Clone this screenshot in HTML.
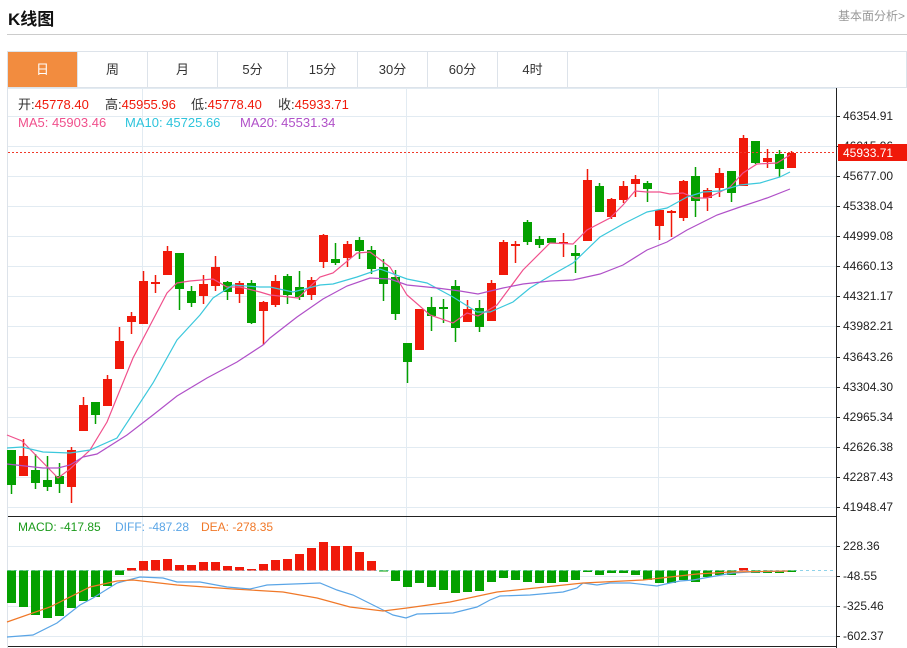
<!DOCTYPE html>
<html><head><meta charset="utf-8">
<style>
*{margin:0;padding:0;box-sizing:border-box}
body{width:907px;height:648px;background:#fff;font-family:"Liberation Sans","Noto Sans CJK SC",sans-serif;position:relative;overflow:hidden;color:#333}
.t{position:absolute;left:8px;top:5px;font-size:17px;font-weight:bold;color:#111}
.r{position:absolute;right:2px;top:7px;font-size:12px;color:#999}
.hl{position:absolute;left:7px;right:0;top:34px;border-top:1px solid #ccc}
.tabs{position:absolute;left:7px;top:51px;width:900px;height:37px;border:1px solid #dde3ea;display:flex}
.tabs div{width:70px;height:35px;line-height:35px;text-align:center;font-size:13px;border-right:1px solid #dde3ea;color:#333}
.tabs div.a{background:#f28c3f;color:#fff}
svg{position:absolute;left:0;top:0}
</style></head><body>
<div class="t">K线图</div>
<div class="r">基本面分析&gt;</div>
<div class="hl"></div>
<div class="tabs"><div class="a">日</div><div>周</div><div>月</div><div>5分</div><div>15分</div><div>30分</div><div>60分</div><div>4时</div></div>
<svg id="s" width="907" height="648" viewBox="0 0 907 648" font-family="Liberation Sans, Noto Sans CJK SC, sans-serif">
<g id="grid" stroke="#e2ebf2" stroke-width="1"></g>
<line x1="7.5" y1="88" x2="7.5" y2="648" stroke="#dde3ea"/>
<g id="c"></g>
<g id="m"></g>
<line x1="8" y1="516.5" x2="836" y2="516.5" stroke="#222"/>
<line x1="8" y1="646.5" x2="836" y2="646.5" stroke="#222"/>
<line x1="836.5" y1="88" x2="836.5" y2="648" stroke="#222"/>
<line x1="8" y1="152.5" x2="836" y2="152.5" stroke="#f03a2a" stroke-dasharray="2,2"/>
<g id="ax" font-size="12" fill="#222"></g>
<rect x="838" y="144" width="69" height="17" fill="#f0190a"/>
<text x="843" y="157" font-size="12" fill="#fff">45933.71</text>
<g font-size="13">
<text x="18" y="109" fill="#333">开:<tspan fill="#f0190a">45778.40</tspan></text>
<text x="105" y="109" fill="#333">高:<tspan fill="#f0190a">45955.96</tspan></text>
<text x="191" y="109" fill="#333">低:<tspan fill="#f0190a">45778.40</tspan></text>
<text x="278" y="109" fill="#333">收:<tspan fill="#f0190a">45933.71</tspan></text>
<text x="18" y="127" fill="#f0508c">MA5: 45903.46</text>
<text x="125" y="127" fill="#2ec4dc">MA10: 45725.66</text>
<text x="240" y="127" fill="#b050c8">MA20: 45531.34</text>
</g>
<g font-size="12">
<text x="18" y="531" fill="#1a9a1a">MACD: -417.85</text>
<text x="115" y="531" fill="#5aa5e6">DIFF: -487.28</text>
<text x="201" y="531" fill="#f07828">DEA: -278.35</text>
</g>
</svg>
<script>
var NS="http://www.w3.org/2000/svg";
function el(p,t,a){var e=document.createElementNS(NS,t);for(var k in a)e.setAttribute(k,a[k]);document.getElementById(p).appendChild(e);return e;}
var g="grid";
for(var y=116;y<=507;y+=30.07)el(g,"line",{x1:8,x2:836,y1:Math.round(y)+.5,y2:Math.round(y)+.5});
el(g,"line",{x1:8,x2:836,y1:88.5,y2:88.5});
[546,576,606,636].forEach(function(y){el(g,"line",{x1:8,x2:836,y1:y+.5,y2:y+.5});});
[142,406,658].forEach(function(x){el(g,"line",{x1:x+.5,x2:x+.5,y1:88,y2:646});});
var labs=["46354.91","46015.96","45677.00","45338.04","44999.08","44660.13","44321.17","43982.21","43643.26","43304.30","42965.34","42626.38","42287.43","41948.47"];
labs.forEach(function(l,i){var y=Math.round(116+i*30.07);el("ax","line",{x1:836,x2:840,y1:y+.5,y2:y+.5,stroke:"#222"});var t=el("ax","text",{x:843,y:y+4});t.textContent=l;});
[["228.36",546],["-48.55",576],["-325.46",606],["-602.37",636]].forEach(function(a){el("ax","line",{x1:836,x2:840,y1:a[1]+.5,y2:a[1]+.5,stroke:"#222"});var t=el("ax","text",{x:843,y:a[1]+4});t.textContent=a[0];});
var R="#f0190a",G="#04a000";
var C=[[450,485,450,494,G],[456,476,439,476,R],[470,483,454,489,G],[480,487,456,491,G],[476,484,463,493,G],[450,487,447,503,R],[405,431,397,431,R],[402,415,402,424,G],[379,406,375,406,R],[341,369,327,369,R],[316,322,312,334,R],[281,324,271,324,R],[282,284,275,293,R],[251,275,246,275,R],[253,289,253,310,G],[291,303,286,307,G],[284,296,275,304,R],[267,286,256,291,R],[282,292,281,300,G],[283,294,281,303,R],[283,323,280,324,G],[302,311,301,345,R],[281,305,275,307,R],[276,295,274,304,G],[287,297,271,300,G],[280,295,277,300,R],[235,262,234,268,R],[259,263,243,265,G],[244,258,241,267,R],[240,251,237,259,G],[250,269,246,274,G],[267,284,259,301,G],[277,314,270,320,G],[343,362,343,383,G],[309,350,309,350,R],[307,316,297,331,G],[307,308,299,323,G],[286,328,280,342,G],[309,322,300,322,R],[308,327,300,332,G],[283,321,280,321,R],[242,275,240,275,R],[244,246,241,263,R],[222,242,220,245,G],[239,245,236,248,G],[238,243,238,243,G],[242,243,233,257,R],[253,256,245,273,G],[180,241,169,241,R],[186,212,183,212,G],[199,217,198,219,R],[186,200,181,203,R],[179,184,175,197,R],[183,189,181,202,G],[210,226,210,240,R],[211,213,210,237,R],[181,218,180,221,R],[176,201,167,217,G],[190,198,188,211,R],[173,188,168,197,R],[171,193,171,202,G],[138,186,135,186,R],[141,163,141,164,G],[158,162,149,168,R],[154,169,150,177,G],[153,168,151,168,R]];
C.forEach(function(c,i){var x=11+12*i;el("c","line",{x1:x+.5,x2:x+.5,y1:c[2],y2:c[3],stroke:c[4],"stroke-width":1.5});el("c","rect",{x:x-4,y:c[0],width:9,height:Math.max(2,c[1]-c[0]),fill:c[4]});});
function pl(pts,col){el("c","polyline",{points:pts,fill:"none",stroke:col,"stroke-width":1.2});}
pl("7,435 22,441 58,478 70,469 90,450 107,422 133,358 167,293 177,283 190,281 213,279 227,287 240,287 260,292 270,295 298,298 320,277 333,273 357,253 370,252 390,267 407,295 430,315 453,323 467,313 478,316 497,305 523,270 550,243 573,244 587,230 610,218 623,205 635,191 647,192 660,192 670,194 683,193 695,198 707,198 720,192 730,187 743,173 757,164 777,163 790,155","#f0508c");
pl("7,448 22,447 43,452 70,453 90,450 117,438 153,383 177,340 200,315 213,298 233,285 260,287 270,287 293,292 320,285 333,284 357,277 380,269 407,279 427,283 453,297 477,312 490,312 513,302 530,288 550,276 573,263 600,237 623,224 647,212 667,208 687,197 703,192 720,191 740,185 760,183 780,177 790,172","#3cc8dc");
pl("7,464 43,468 58,468 70,465 83,457 97,454 127,435 153,415 177,396 207,378 237,362 263,345 270,338 297,317 323,299 347,286 370,278 390,279 407,285 437,288 460,291 478,294 503,288 523,284 550,281 573,280 600,274 623,265 647,250 667,242 687,230 717,215 740,207 767,198 790,189","#b050c8");
var Z=570.5;
var M=[603,607,615,618,616,608,601,597,586,575,568,561,560,559,565,565,562,562,566,567,569,564,560,559,554,548,542,546,546,552,561,571,581,587,583,587,590,593,592,591,582,578,580,582,583,583,582,580,572,575,573,573,575,580,583,583,580,582,577,575,575,568,573,573,573,572];
el("m","line",{x1:8,x2:836,y1:Z,y2:Z,stroke:"#8fd3ea","stroke-dasharray":"3,3"});
M.forEach(function(v,i){var x=11+12*i;var up=v<Z;var h=Math.abs(v-Z);if(h<1)h=1;el("m","rect",{x:x-4,y:up?v:Z,width:9,height:h,fill:up?R:G});});
function ml(pts,col){el("m","polyline",{points:pts,fill:"none",stroke:col,"stroke-width":1.2});}
ml("7,637 33,635 57,623 80,605 93,598 117,583 140,577 163,578 177,582 200,582 227,587 250,589 267,585 320,583 337,590 353,595 377,607 393,615 406,618 417,614 453,613 477,607 490,600 500,596 530,595 563,592 577,588 583,583 597,585 610,583 630,583 657,586 670,583 680,581 693,580 710,577 733,573 750,572 788,571","#5aa5e6");
ml("7,622 50,607 90,587 117,581 133,580 177,585 233,589 283,592 317,598 350,607 383,611 407,608 450,602 497,592 583,583 643,580 697,574 730,572 788,571","#f07828");
</script>
</body></html>
